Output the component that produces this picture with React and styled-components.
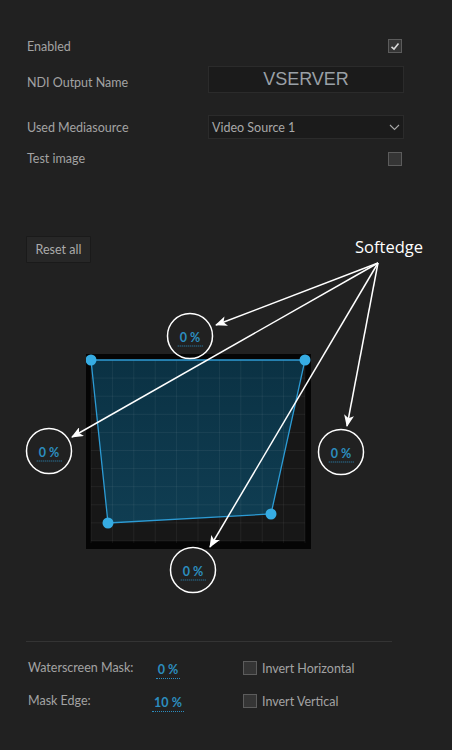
import React from "react";
import styled, { createGlobalStyle } from "styled-components";

const Global = createGlobalStyle`
  html, body {
    margin: 0;
    padding: 0;
    background: #212121;
  }
  body {
    font-family: Lato, "Open Sans", sans-serif;
  }
`;

const Page = styled.div`
  width: 452px;
  height: 750px;
  background: #212121;
  overflow: hidden;
`;

const Form = styled.div`
  padding: 39px 48px 0 27px;
  display: flex;
  flex-direction: column;
`;

const Row = styled.div`
  display: flex;
  align-items: center;
  justify-content: space-between;
  height: ${(p) => p.h}px;
  margin-top: ${(p) => p.mt || 0}px;
`;

const Label = styled.span`
  font-size: 12.5px;
  color: #a3a3a3;
  padding-top: ${(p) => p.pt || 0}px;
`;

const Check = styled.span`
  box-sizing: border-box;
  width: 14px;
  height: 14px;
  margin-right: 2px;
  border: 1px solid #5c5c5c;
  background: #353535;
  display: flex;
  align-items: center;
  justify-content: center;
`;

const TextBox = styled.div`
  box-sizing: border-box;
  width: 196px;
  height: 27px;
  background: #1b1b1b;
  border: 1px solid #2b2b2b;
  display: flex;
  align-items: center;
  justify-content: center;
  font-family: "Liberation Sans", Arial, sans-serif;
  font-size: 18px;
  color: #9aa0a6;
`;

const Select = styled.div`
  box-sizing: border-box;
  width: 196px;
  height: 24px;
  background: #1b1b1b;
  border: 1px solid #2b2b2b;
  display: flex;
  align-items: center;
  justify-content: space-between;
  padding: 0 3px 0 3px;
  font-size: 12.5px;
  color: #a8a8a8;
`;

const Stage = styled.div`
  position: relative;
  height: 434px;
  display: flex;
  flex-direction: column;
  align-items: flex-start;
`;

const ResetButton = styled.button`
  margin: 70px 0 0 26px;
  width: 65px;
  height: 27px;
  box-sizing: border-box;
  background: #272727;
  border: 1px solid #1a1a1a;
  border-radius: 1px;
  color: #ababab;
  font-family: Lato, sans-serif;
  font-size: 12.5px;
  padding: 0;
`;

const Canvas = styled.svg`
  display: block;
  margin: 91px 0 0 86px;
`;

const Overlay = styled.svg`
  position: absolute;
  left: 0;
  top: 0;
  pointer-events: none;
`;

const Softedge = styled.span`
  position: absolute;
  left: 355px;
  top: 69px;
  font-family: "Open Sans", sans-serif;
  font-size: 16.5px;
  color: #ffffff;
`;

const Value = styled.span`
  display: inline-block;
  font-size: 12.5px;
  font-weight: 700;
  color: #2c8dbf;
  line-height: 14px;
  padding: 0 2px 1px;
  border-bottom: 1px dotted #2c8dbf;
  white-space: nowrap;
`;

const Badge = styled.div`
  position: absolute;
  left: ${(p) => p.x}px;
  top: ${(p) => p.y}px;
  transform: translate(-50%, -50%);
`;

const Footer = styled.div`
  margin: 41px 60px 0 26px;
  border-top: 1px solid #343434;
  padding-top: 19px;
  display: grid;
  grid-template-columns: 122px 40px 55px 1fr;
  grid-auto-rows: 14px;
  row-gap: 19px;
  align-items: center;
`;

const FootLabel = styled.span`
  font-size: 12.5px;
  color: #a3a3a3;
  padding-left: 2px;
  transform: translateY(-1px);
`;

const FootValue = styled.div`
  display: flex;
  justify-content: center;
  transform: translateY(3px);
`;

const Toggle = styled.label`
  grid-column: 4;
  display: flex;
  align-items: center;
  gap: 5px;
  font-size: 12.5px;
  color: #a3a3a3;
`;

const Box = styled.span`
  box-sizing: border-box;
  width: 14px;
  height: 14px;
  border: 1px solid #5c5c5c;
  background: #353535;
`;

function Checkbox({ checked }) {
  return (
    <Check>
      {checked && (
        <svg width="10" height="9" viewBox="0 0 10 9">
          <path d="M1.5 4.8 L4 7 L8.5 1.5" fill="none" stroke="#d8d8d8" strokeWidth="1.6" />
        </svg>
      )}
    </Check>
  );
}

function Grid() {
  const W = 225;
  const H = 195;
  const x0 = 5;
  const x1 = 219;
  const y0 = 6;
  const y1 = 187;
  const cols = [];
  for (let i = 0; i <= 10; i++) cols.push(x0 + (i * (x1 - x0)) / 10);
  const rows = [];
  for (let j = 0; j <= 10; j++) rows.push(y0 + (j * (y1 - y0)) / 10);
  const pts = [
    [5, 6],
    [219, 6],
    [185, 160],
    [22, 169],
  ];
  return (
    <Canvas width={W} height={H} viewBox={`0 0 ${W} ${H}`}>
      <defs>
        <linearGradient id="fill" x1="0" y1="0" x2="0" y2="1">
          <stop offset="0" stopColor="#0a3346" />
          <stop offset="1" stopColor="#0f3f55" />
        </linearGradient>
      </defs>
      <rect width={W} height={H} fill="#050505" />
      <rect x={x0} y={y0} width={x1 - x0} height={y1 - y0} fill="#171717" />
      <polygon points={pts.map((p) => p.join(",")).join(" ")} fill="url(#fill)" opacity="0.95" />
      {cols.map((x) => (
        <line key={"c" + x} x1={x} y1={y0} x2={x} y2={y1 + 2} stroke="#ffffff" strokeOpacity="0.06" />
      ))}
      {rows.map((y) => (
        <line key={"r" + y} x1={x0} y1={y} x2={x1} y2={y} stroke="#ffffff" strokeOpacity="0.06" />
      ))}
      <polygon points={pts.map((p) => p.join(",")).join(" ")} fill="none" stroke="#2c9bd4" strokeWidth="1.3" />
      {pts.map(([x, y]) => (
        <circle key={x + "-" + y} cx={x} cy={y} r="5.5" fill="#36ace3" />
      ))}
    </Canvas>
  );
}

const origin = [378, 97];
const targets = [
  { tip: [216, 159], c: [190, 170] },
  { tip: [72, 271], c: [49, 285] },
  { tip: [347, 260], c: [341, 286] },
  { tip: [210, 381], c: [193, 404] },
];

function Annotations() {
  return (
    <Overlay width="452" height="434" viewBox="0 0 452 434">
      <defs>
        <marker id="head" viewBox="0 0 12 10" refX="11" refY="5" markerWidth="12" markerHeight="10" markerUnits="userSpaceOnUse" orient="auto">
          <path d="M0 0 L12 5 L0 10 L3 5 z" fill="#ffffff" />
        </marker>
      </defs>
      {targets.map((t, i) => (
        <g key={i}>
          <line
            x1={origin[0]}
            y1={origin[1]}
            x2={t.tip[0]}
            y2={t.tip[1]}
            stroke="#ffffff"
            strokeWidth="1.5"
            markerEnd="url(#head)"
          />
          <circle cx={t.c[0]} cy={t.c[1]} r="22.5" fill="none" stroke="#ffffff" strokeWidth="1.5" />
        </g>
      ))}
    </Overlay>
  );
}

export default function App() {
  return (
    <Page>
      <Global />
      <Form>
        <Row h={14}>
          <Label>Enabled</Label>
          <Checkbox checked />
        </Row>
        <Row h={27} mt={13}>
          <Label pt={5}>NDI Output Name</Label>
          <TextBox>VSERVER</TextBox>
        </Row>
        <Row h={24} mt={22}>
          <Label pt={0}>Used Mediasource</Label>
          <Select>
            <span>Video Source 1</span>
            <svg width="11" height="7" viewBox="0 0 11 7">
              <path d="M1 1 L5.5 5.5 L10 1" fill="none" stroke="#a8a8a8" strokeWidth="1.1" />
            </svg>
          </Select>
        </Row>
        <Row h={15} mt={12}>
          <Label>Test image</Label>
          <Checkbox />
        </Row>
      </Form>
      <Stage>
        <ResetButton>Reset all</ResetButton>
        <Grid />
        <Annotations />
        <Softedge>Softedge</Softedge>
        {targets.map((t, i) => (
          <Badge key={i} x={t.c[0]} y={t.c[1]}>
            <Value>0 %</Value>
          </Badge>
        ))}
      </Stage>
      <Footer>
        <FootLabel>Waterscreen Mask:</FootLabel>
        <FootValue>
          <Value>0 %</Value>
        </FootValue>
        <Toggle>
          <Box />
          Invert Horizontal
        </Toggle>
        <FootLabel>Mask Edge:</FootLabel>
        <FootValue>
          <Value>10 %</Value>
        </FootValue>
        <Toggle>
          <Box />
          Invert Vertical
        </Toggle>
      </Footer>
    </Page>
  );
}
